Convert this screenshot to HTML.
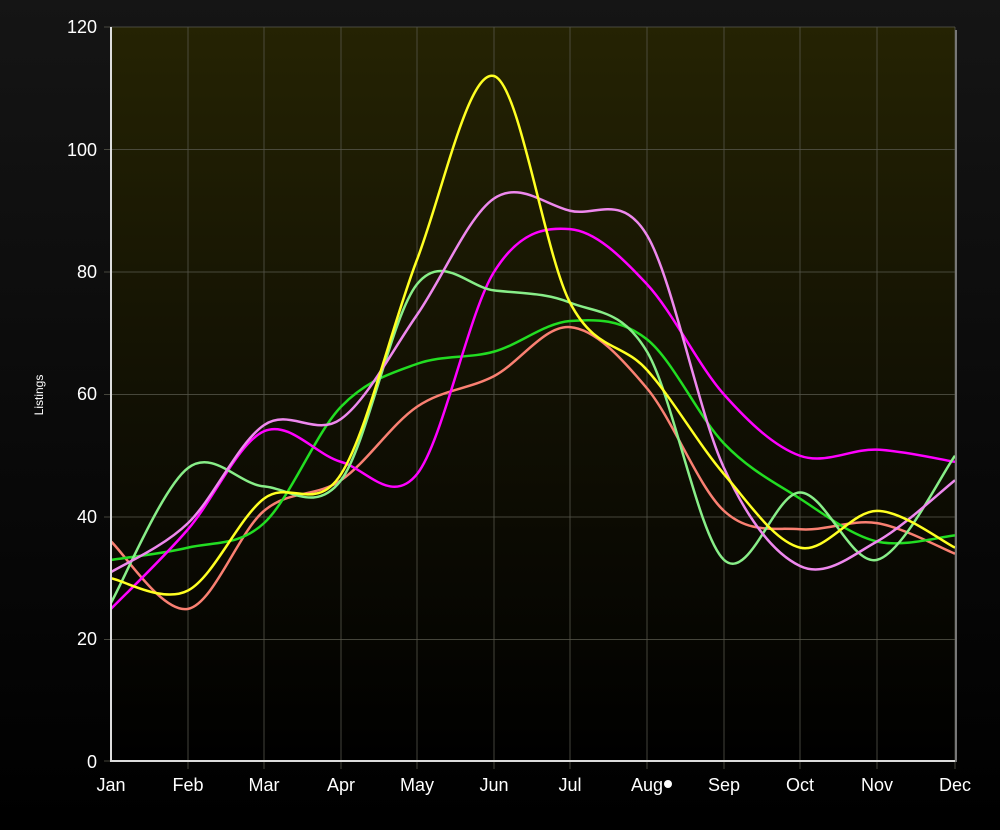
<!DOCTYPE html>
<html><head><meta charset="utf-8"><style>
html,body{margin:0;padding:0;width:1000px;height:830px;overflow:hidden;background:#000}
body{background:linear-gradient(#151515,#080808 60%,#000);font-family:"Liberation Sans",sans-serif}
svg{position:absolute;left:0;top:0}
</style></head><body>
<svg id="s" width="1000" height="830" viewBox="0 0 1000 830">
<defs><linearGradient id="g" x1="0" y1="0" x2="0" y2="1">
<stop offset="0" stop-color="#252303"/><stop offset="0.55" stop-color="#100f03"/><stop offset="1" stop-color="#000"/></linearGradient></defs>
<rect x="111" y="27" width="844" height="734" fill="url(#g)"/>
<g id="grid" stroke="#55554a" stroke-width="1" stroke-opacity="0.8"></g>
<g id="lines" fill="none" stroke-width="2.5"></g>
<line x1="111" y1="27" x2="111" y2="762" stroke="#ddd" stroke-width="2"/>
<line x1="111" y1="761" x2="956" y2="761" stroke="#ddd" stroke-width="2"/>
<line x1="956" y1="30" x2="956" y2="762" stroke="#777" stroke-width="2"/>
<g fill="#fff" font-size="18" text-anchor="end">
<text x="97" y="33">120</text><text x="97" y="156">100</text><text x="97" y="278">80</text>
<text x="97" y="400">60</text><text x="97" y="523">40</text><text x="97" y="645">20</text><text x="97" y="768">0</text>
</g>
<g fill="#fff" font-size="18" text-anchor="middle">
<text x="111" y="791">Jan</text><text x="188" y="791">Feb</text><text x="264" y="791">Mar</text><text x="341" y="791">Apr</text>
<text x="417" y="791">May</text><text x="494" y="791">Jun</text><text x="570" y="791">Jul</text><text x="647" y="791">Aug</text>
<text x="724" y="791">Sep</text><text x="800" y="791">Oct</text><text x="877" y="791">Nov</text><text x="955" y="791">Dec</text>
</g>
<circle cx="668" cy="784" r="4" fill="#fff"/>
<text x="43" y="395" fill="#fff" font-size="12" text-anchor="middle" transform="rotate(-90 43 395)">Listings</text>
</svg>
<script>
var X=[111,188,264,341,417,494,570,647,724,800,877,955];
function Y(v){return 762-v*6.125;}
var grid=document.getElementById('grid'),h='';
for(var i=1;i<12;i++)h+='<line x1="'+X[i]+'" y1="27" x2="'+X[i]+'" y2="769"/>';
for(var v=20;v<=120;v+=20)h+='<line x1="104" y1="'+Y(v)+'" x2="955" y2="'+Y(v)+'"/>';
h+='<line x1="104" y1="761" x2="111" y2="761"/>';
grid.innerHTML=h;
var S=[
["#fa8072",[36,25,41,46,58,63,71,61,41,38,39,34]],
["#22dd22",[33,35,39,58,65,67,72,69,52,43,36,37]],
["#ff00ff",[25,38,54,49,47,80,87,78,60,50,51,49]],
["#88ee88",[26,48,45,46,78,77,75,67,33,44,33,50]],
["#ee88ee",[31,39,55,56,73,92,90,86,48,32,36,46]],
["#ffff22",[30,28,43,47,82,112,75,64,47,35,41,35]]];
var out='';
S.forEach(function(s){
 var p=s[1].map(function(v,i){return[X[i],Y(v)]});
 var d='M'+p[0][0]+','+p[0][1];
 for(var i=0;i<p.length-1;i++){
  var p0=p[i-1]||p[i],p1=p[i],p2=p[i+1],p3=p[i+2]||p[i+1],t=6;
  d+=' C'+(p1[0]+(p2[0]-p0[0])/t)+','+(p1[1]+(p2[1]-p0[1])/t)+' '+(p2[0]-(p3[0]-p1[0])/t)+','+(p2[1]-(p3[1]-p1[1])/t)+' '+p2[0]+','+p2[1];
 }
 out+='<path d="'+d+'" stroke="'+s[0]+'"/>';
});
document.getElementById('lines').innerHTML=out;
</script>
</body></html>
